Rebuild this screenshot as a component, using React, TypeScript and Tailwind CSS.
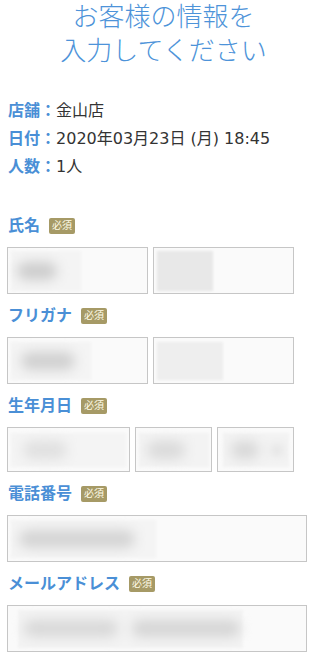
import clsx from "clsx";
import type { ReactNode } from "react";

const FONT = {
  fontFamily: '"DejaVu Sans", "Noto Sans CJK JP", sans-serif',
};

function Badge() {
  return (
    <span className="ml-[9px] inline-flex h-[16px] w-[26px] items-center justify-center rounded-[2px] bg-[#a69a66] text-[10px] leading-none text-[#fffbe6]">
      必須
    </span>
  );
}

function Label({ children }: { children: ReactNode }) {
  return (
    <div className="mb-[10px] flex h-[22px] items-center pl-[1px]">
      <span className="text-[16px] font-bold leading-[22px] text-[#4a8fd6]">
        {children}
      </span>
      <Badge />
    </div>
  );
}

function Box({
  className,
  children,
}: {
  className?: string;
  children?: ReactNode;
}) {
  return (
    <div
      className={clsx(
        "flex shrink-0 items-center overflow-hidden border border-[#c6c6c6] bg-[#fafafa]",
        className
      )}
    >
      {children}
    </div>
  );
}

export default function App() {
  return (
    <main
      className="min-h-[656px] w-[320px] bg-white pl-[7px] text-[#333]"
      style={FONT}
    >
      <h1 className="text-center text-[26px] font-light leading-[34px] text-[#4d93d9]">
        お客様の情報を
        <br />
        入力してください
      </h1>

      <section className="mt-[29px] pl-[1px] text-[16px] leading-[28px]">
        <p>
          <span className="font-bold text-[#4a8fd6]">店舗：</span>金山店
        </p>
        <p>
          <span className="font-bold text-[#4a8fd6]">日付：</span>
          2020年03月23日 (月) 18:45
        </p>
        <p>
          <span className="font-bold text-[#4a8fd6]">人数：</span>1人
        </p>
      </section>

      <form className="mt-[34px]">
        <Label>氏名</Label>
        <div className="flex gap-[5px]">
          <Box className="h-[47px] w-[141px] pl-[3px]">
            <div className="flex h-[40px] w-[70px] items-center bg-[#f4f4f4] pl-[6px] blur-[1px]">
              <div className="h-[18px] w-[40px] rounded-full bg-[#cdcdcd] blur-[6px]" />
            </div>
          </Box>
          <Box className="h-[47px] w-[141px] pl-[3px]">
            <div className="h-[40px] w-[56px] bg-[#e8e8e8] blur-[1px]" />
          </Box>
        </div>

        <div className="mt-[11px]">
          <Label>フリガナ</Label>
        </div>
        <div className="flex gap-[5px]">
          <Box className="h-[47px] w-[141px] pl-[3px]">
            <div className="flex h-[38px] w-[80px] items-center bg-[#f4f4f4] pl-[10px] blur-[1px]">
              <div className="h-[18px] w-[54px] rounded-full bg-[#d0d0d0] blur-[6px]" />
            </div>
          </Box>
          <Box className="h-[47px] w-[141px] pl-[3px]">
            <div className="h-[38px] w-[66px] bg-[#eeeeee] blur-[1px]" />
          </Box>
        </div>

        <div className="mt-[11px]">
          <Label>生年月日</Label>
        </div>
        <div className="flex gap-[5px]">
          <Box className="h-[45px] w-[123px] pl-[3px]">
            <div className="flex h-[34px] w-[115px] items-center bg-[#f4f4f4] pl-[12px] blur-[1px]">
              <div className="h-[18px] w-[44px] rounded-full bg-[#e0e0e0] blur-[6px]" />
            </div>
          </Box>
          <Box className="h-[45px] w-[77px] pl-[3px]">
            <div className="flex h-[34px] w-[70px] items-center bg-[#f3f3f3] pl-[8px] blur-[1px]">
              <div className="h-[18px] w-[38px] rounded-full bg-[#dadada] blur-[6px]" />
            </div>
          </Box>
          <Box className="h-[45px] w-[77px] pl-[5px]">
            <div className="flex h-[34px] w-[66px] items-center gap-[12px] bg-[#f3f3f3] pl-[8px] blur-[1px]">
              <div className="h-[18px] w-[28px] rounded-full bg-[#d8d8d8] blur-[6px]" />
              <div className="h-[12px] w-[12px] rounded-full bg-[#e2e2e2] blur-[4px]" />
            </div>
          </Box>
        </div>

        <div className="mt-[11px]">
          <Label>電話番号</Label>
        </div>
        <Box className="h-[47px] w-[300px] pl-[3px]">
          <div className="flex h-[38px] w-[145px] items-center bg-[#f4f4f4] pl-[8px] blur-[1px]">
            <div className="h-[18px] w-[116px] rounded-full bg-[#d4d4d4] blur-[6px]" />
          </div>
        </Box>

        <div className="mt-[11px]">
          <Label>メールアドレス</Label>
        </div>
        <Box className="h-[47px] w-[300px] pl-[10px]">
          <div className="flex h-[38px] w-[225px] items-center gap-[14px] bg-[#f3f3f3] pl-[6px] blur-[1px]">
            <div className="h-[17px] w-[94px] rounded-full bg-[#d8d8d8] blur-[6px]" />
            <div className="h-[17px] w-[108px] rounded-full bg-[#d5d5d5] blur-[6px]" />
          </div>
        </Box>
      </form>
    </main>
  );
}
